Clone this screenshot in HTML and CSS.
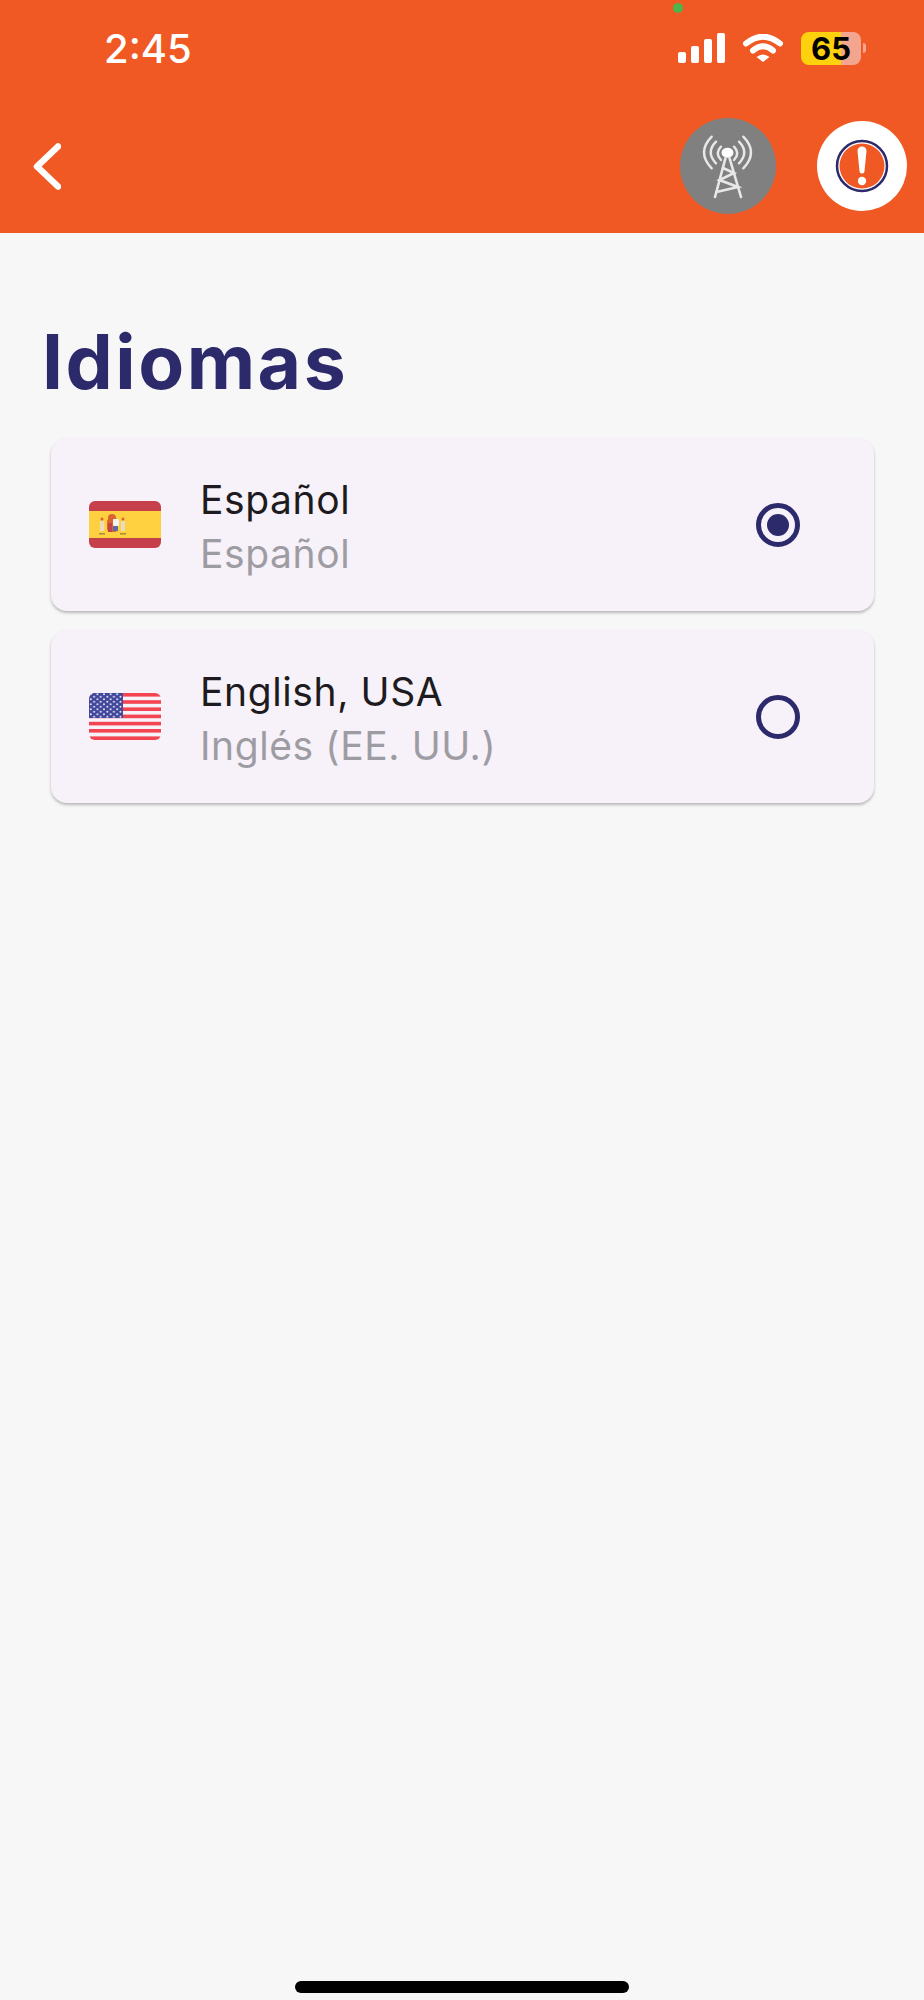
FILE: index.html
```html
<!DOCTYPE html>
<html lang="es">

<head>
    <meta charset="UTF-8">
    <meta name="viewport" content="width=device-width, initial-scale=1.0">
    <title>Idiomas</title>
    <link rel="stylesheet" href="styles.css">
</head>

<body>
    <div id="container">
        <header class="head">
            <span class="camera_dot"></span>
            <div class="status">
                <div class="time">2:45</div>
                <div class="status_icons">
                    <div class="signal"><i></i><i></i><i></i><i></i></div>
                    <svg class="wifi" width="40" height="28" viewBox="0 0 40 28">
                        <path d="M3 9.500Q20 -4 37 9.500" fill="none" stroke="#fff" stroke-width="6" stroke-linecap="round"/>
                        <path d="M10 16.500Q20 8 30 16.500" fill="none" stroke="#fff" stroke-width="6" stroke-linecap="round"/>
                        <path d="M13.500 23L20 28L26.500 23Q20 18 13.500 23Z" fill="#fff"/>
                    </svg>
                    <div class="battery">
                        <div class="battery_body">65</div>
                        <div class="battery_cap"></div>
                    </div>
                </div>
            </div>
            <nav class="nav">
                <svg class="back" width="28" height="47" viewBox="0 0 28 47">
                    <path d="M25 3.500L4 23.500L25 43.500" fill="none" stroke="#fff" stroke-width="6.500" stroke-linecap="round" stroke-linejoin="round"/>
                </svg>
                <div class="tower_btn">
                    <svg width="96" height="96" viewBox="0 0 96 96" fill="none" stroke="#e8e8e8" stroke-linecap="round">
                        <g stroke-width="2.400">
                            <path d="M31.700 18.700Q16.300 34.500 31.700 50.300"/>
                            <path d="M36 23.700Q25.400 34.500 36 45.300"/>
                            <path d="M41 28.700Q34.400 35.300 41 42"/>
                            <path d="M63.300 18.700Q78.700 34.500 63.300 50.300"/>
                            <path d="M59 23.700Q69.600 34.500 59 45.300"/>
                            <path d="M54 28.700Q60.600 35.300 54 42"/>
                        </g>
                        <ellipse cx="47.500" cy="34.700" rx="6" ry="5" fill="#fff" stroke="none"/>
                        <g stroke-width="2.600">
                            <path d="M45.500 40L35 79"/>
                            <path d="M49.500 40L61 79"/>
                            <path d="M43 50L54 55L39.500 62L58 69L36.500 74"/>
                        </g>
                    </svg>
                </div>
                <div class="alert_btn">
                    <svg width="90" height="90" viewBox="0 0 90 90">
                        <circle cx="45" cy="45" r="25" fill="#fff" stroke="#2d2a6b" stroke-width="2.500"/>
                        <circle cx="45" cy="45" r="22.500" fill="#f05923"/>
                        <path d="M40.500 30a4.500 4.500 0 0 1 9 0L47.500 50a2.500 2.500 0 0 1 -5 0Z" fill="#fff"/>
                        <circle cx="45" cy="60" r="4.200" fill="#fff"/>
                    </svg>
                </div>
            </nav>
        </header>

        <section class="content">
            <h1 class="title">Idiomas</h1>
            <ul class="lang_list">
                <li class="lang_item">
                    <svg class="flag" width="72" height="47" viewBox="0 0 72 47">
                        <rect width="72" height="47" rx="6" fill="#c5404a"/>
                        <rect y="10" width="72" height="27" fill="#ffd03f"/>
                        <circle cx="23" cy="17" r="4" fill="#d8652e"/>
                        <rect x="18" y="17" width="11" height="14" rx="4" fill="#d8652e"/>
                        <rect x="24" y="18" width="6" height="7" rx="1" fill="#f5f1f0"/>
                        <rect x="24" y="25" width="5" height="5" rx="1" fill="#5a6aa8"/>
                        <rect x="19" y="22" width="4" height="9" fill="#c5404a"/>
                        <rect x="11" y="20" width="4" height="10" fill="#e9dcc0"/>
                        <rect x="32" y="20" width="4" height="10" fill="#e9dcc0"/>
                        <circle cx="13" cy="18" r="1.500" fill="#d8652e"/>
                        <circle cx="34" cy="18" r="1.500" fill="#d8652e"/>
                        <rect x="10" y="32" width="6" height="1.500" fill="#a88a3c"/>
                        <rect x="31" y="32" width="6" height="1.500" fill="#a88a3c"/>
                    </svg>
                    <div class="lang_text">
                        <div class="lang_name">Español</div>
                        <div class="lang_sub">Español</div>
                    </div>
                    <div class="radio radio_on"></div>
                </li>
                <li class="lang_item">
                    <svg class="flag" width="72" height="47" viewBox="0 0 72 47">
                        <defs>
                            <pattern id="stars" width="6.600" height="5" patternUnits="userSpaceOnUse">
                                <circle cx="1.800" cy="1.300" r="1" fill="#e8e8f4"/>
                                <circle cx="5.100" cy="3.800" r="1" fill="#e8e8f4"/>
                            </pattern>
                            <clipPath id="flag_clip"><rect width="72" height="47" rx="6"/></clipPath>
                        </defs>
                        <g clip-path="url(#flag_clip)">
                            <rect width="72" height="47" fill="#f7f2f9"/>
                            <rect y="0" width="72" height="3.600" fill="#f4444f"/>
                            <rect y="7.200" width="72" height="3.600" fill="#f4444f"/>
                            <rect y="14.400" width="72" height="3.600" fill="#f4444f"/>
                            <rect y="21.600" width="72" height="3.600" fill="#f4444f"/>
                            <rect y="28.800" width="72" height="3.600" fill="#f4444f"/>
                            <rect y="36" width="72" height="3.600" fill="#f4444f"/>
                            <rect y="43.400" width="72" height="3.600" fill="#f4444f"/>
                            <rect width="34" height="25" fill="#41479b"/>
                            <rect width="34" height="25" fill="url(#stars)"/>
                        </g>
                    </svg>
                    <div class="lang_text">
                        <div class="lang_name">English, USA</div>
                        <div class="lang_sub">Inglés (EE. UU.)</div>
                    </div>
                    <div class="radio"></div>
                </li>
            </ul>
        </section>

        <footer class="foot">
            <div class="home_bar"></div>
        </footer>
    </div>
</body>

</html>
```

FILE: styles.css
```css
* {
    margin: 0;
    padding: 0;
    box-sizing: border-box;
}

ul,
li {
    list-style: none;
}

body {
    background-color: #f7f7f7;
    font-family: Inter, "Liberation Sans", sans-serif;
}

#container {
    width: 924px;
    height: 2000px;
    display: flex;
    flex-direction: column;
}

.head {
    height: 233px;
    background-color: #f05923;
    position: relative;
}

.camera_dot {
    position: absolute;
    left: 673px;
    top: 3px;
    width: 10px;
    height: 10px;
    border-radius: 50%;
    background-color: #4cb64a;
}

.status {
    height: 99px;
    padding: 0 58px 3px 104px;
    display: flex;
    align-items: center;
    justify-content: space-between;
}

.time {
    font-size: 40px;
    font-weight: 500;
    color: #fff;
}

.status_icons {
    display: flex;
    align-items: center;
    gap: 18px;
}

.signal {
    display: flex;
    align-items: flex-end;
    gap: 5px;
    height: 30px;
}

.signal i {
    display: block;
    width: 8px;
    border-radius: 2px;
    background-color: #fff;
}

.signal i:nth-child(1) {
    height: 11px;
}

.signal i:nth-child(2) {
    height: 17px;
}

.signal i:nth-child(3) {
    height: 24px;
}

.signal i:nth-child(4) {
    height: 30px;
}

.battery {
    display: flex;
    align-items: center;
    gap: 2px;
}

.battery_body {
    width: 60px;
    height: 33px;
    border-radius: 8px;
    background: linear-gradient(to right, #fdd20d 66%, #f3a58f 66%);
    color: #000;
    font-size: 31px;
    font-weight: 700;
    line-height: 33px;
    text-align: center;
}

.battery_cap {
    width: 3px;
    height: 10px;
    border-radius: 0 3px 3px 0;
    background-color: #f3a58f;
}

.nav {
    height: 134px;
    padding: 0 17px 0 33px;
    display: flex;
    align-items: center;
}

.back {
    margin-right: auto;
}

.tower_btn {
    width: 96px;
    height: 96px;
    border-radius: 50%;
    background-color: #808080;
    margin-right: 41px;
}

.alert_btn {
    width: 90px;
    height: 90px;
    border-radius: 50%;
    background-color: #fff;
}

.tower_btn svg,
.alert_btn svg {
    display: block;
}

.content {
    flex: 1;
    padding-top: 85px;
}

.title {
    padding-left: 42px;
    font-size: 75px;
    font-weight: 700;
    letter-spacing: 2.5px;
    line-height: 88px;
    color: #2d2a6b;
}

.lang_list {
    margin: 32px 50px 0 51px;
    display: flex;
    flex-direction: column;
    gap: 19px;
}

.lang_item {
    height: 173px;
    padding: 0 74px 0 38px;
    display: flex;
    align-items: center;
    border-radius: 16px;
    background-color: #f7f2f9;
    box-shadow: 0 2px 3px rgba(0, 0, 0, 0.25);
}

.flag {
    flex-shrink: 0;
    margin-right: 39px;
}

.lang_text {
    flex: 1;
    padding-top: 5px;
    letter-spacing: 0.6px;
    font-size: 39px;
    line-height: 54px;
}

.lang_name {
    color: #1d1b20;
}

.lang_sub {
    color: #9e9ca3;
}

.radio {
    width: 44px;
    height: 44px;
    border: 5px solid #2d2a6b;
    border-radius: 50%;
    display: flex;
    align-items: center;
    justify-content: center;
}

.radio_on::before {
    content: "";
    width: 22px;
    height: 22px;
    border-radius: 50%;
    background-color: #2d2a6b;
}

.foot {
    height: 19px;
    padding: 0 295px;
}

.home_bar {
    height: 12px;
    border-radius: 6px;
    background-color: #000;
}
```
